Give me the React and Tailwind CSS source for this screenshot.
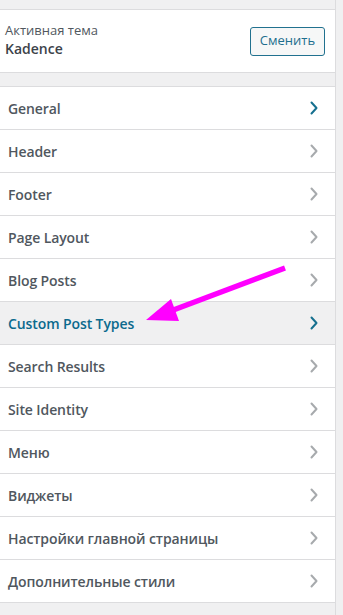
import React from "react";

const rows = [
  { label: "General", active: true },
  { label: "Header" },
  { label: "Footer" },
  { label: "Page Layout" },
  { label: "Blog Posts" },
  { label: "Custom Post Types", highlight: true },
  { label: "Search Results" },
  { label: "Site Identity" },
  { label: "Меню" },
  { label: "Виджеты" },
  { label: "Настройки главной страницы" },
  { label: "Дополнительные стили" },
];

function Chevron({ color }) {
  return (
    <svg width="10" height="16" viewBox="0 0 10 16" fill="none">
      <path d="M2.5 2.5 L7.5 8 L2.5 13.5" stroke={color} strokeWidth="2" strokeLinecap="round" strokeLinejoin="round" />
    </svg>
  );
}

export default function App() {
  return (
    <div
      className="relative w-[343px] h-[615px] overflow-hidden bg-[#f0f0f1] flex"
      style={{ fontFamily: '"Open Sans", "Noto Sans", sans-serif' }}
    >
      <div className="w-[336px] h-full border-r border-[#dcdcde] flex flex-col pt-[9px]">
        <div className="h-[64px] bg-white border-y border-[#dcdcde] flex items-center justify-between pl-[5px] pr-[10px]">
          <div className="flex flex-col mb-[3px]">
            <span className="text-[13px] leading-[18px] text-[#50575e]">Активная тема</span>
            <span className="text-[14px] leading-[19px] font-semibold text-[#3c434a]">Kadence</span>
          </div>
          <button className="h-[29px] w-[75px] rounded-[3px] border border-[#21718f] bg-[#f6f7f7] text-[13px] text-[#1d6f8e] flex items-center justify-center">
            Сменить
          </button>
        </div>
        <div className="h-[13px]" />
        <div className="border-t border-[#dcdcde]">
          {rows.map((r) => (
            <div
              key={r.label}
              className={`h-[43px] border-b border-[#dcdcde] flex items-center justify-between pl-[8px] pr-[16px] ${
                r.highlight ? "bg-[#f0f0f1]" : "bg-white"
              }`}
            >
              <span
                className={`text-[14px] font-semibold tracking-[-0.1px] ${
                  r.highlight ? "text-[#0b6a8d]" : "text-[#50575e]"
                }`}
              >
                {r.label}
              </span>
              <Chevron color={r.active || r.highlight ? "#16708f" : "#a7aaad"} />
            </div>
          ))}
        </div>
      </div>
      <svg
        className="absolute left-0 top-0 pointer-events-none"
        width="343"
        height="615"
        viewBox="0 0 343 615"
      >
        <line x1="285" y1="268" x2="168" y2="312" stroke="#f0f" strokeWidth="5.5" strokeLinecap="butt" />
        <polygon points="146,320 171,299 179,321" fill="#f0f" />
      </svg>
    </div>
  );
}
